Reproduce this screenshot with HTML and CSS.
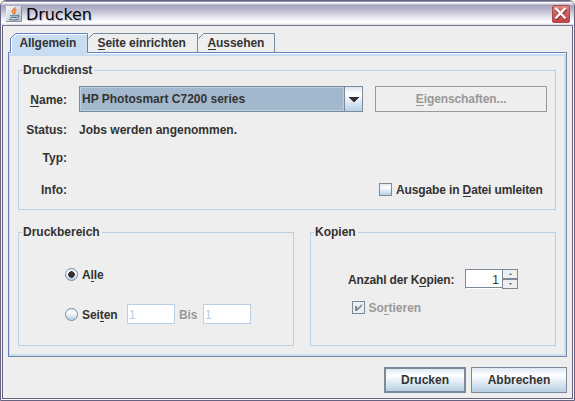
FILE: index.html
```html
<!DOCTYPE html>
<html lang="de">
<head>
<meta charset="utf-8">
<title>Drucken</title>
<link rel="stylesheet" href="styles.css">
</head>
<body>
<div class="window">
  <header class="titlebar">
    <svg class="java" width="16" height="16" viewBox="0 0 16 16">
      <defs><linearGradient id="tile" x2="1" y2="1"><stop stop-color="#f5f7f8"/><stop offset="1" stop-color="#aebdc8"/></linearGradient></defs>
      <rect width="16" height="16" fill="url(#tile)"/>
      <path d="M0 15.500h15.500V0" fill="none" stroke="#8192a2"/>
      <path d="M9.300 1.200C10 3 5.800 3.800 6.300 5.600C6.600 6.700 8 7.300 7.400 8.600M10.500 4C8.500 4.600 8.200 5.500 8.800 6.300C9.300 7.100 8.900 7.800 8.500 8.300" fill="none" stroke="#e9782a" stroke-width="1.400"/>
      <path d="M4 9.700h7M4.500 11.500h6M11 9.500c2.500-.5 2.500 1.300 0 2M3 13.300c2 .9 7 .9 9.500 0" fill="none" stroke="#57758f" stroke-width="1.100"/>
    </svg>
    <h1 class="title">Drucken</h1>
    <svg class="close" width="18" height="18" viewBox="0 0 18 18">
      <defs><linearGradient id="red" x2="0" y2="1"><stop stop-color="#dd9080"/><stop offset=".45" stop-color="#cc605c"/><stop offset="1" stop-color="#c8434c"/></linearGradient></defs>
      <rect x=".5" y=".5" width="17" height="17" rx="1.500" fill="url(#red)" stroke="#a9484d"/>
      <path d="M4 4l10 10.500M14 4L4 14.500" stroke="#803038" stroke-width="3"/>
      <path d="M3.500 3l10 10.500M13.500 3l-10 10.500" stroke="#fff" stroke-width="2.400"/>
    </svg>
  </header>
  <main class="content">
    <nav class="tabs">
      <div class="tab active"><svg width="78" height="23" viewBox="0 0 78 23"><path d="M.5 23V5.500l5-5h72V23z" fill="#c8ddf2"/><path d="M1.500 20V6l4.500-4.500H77" fill="none" stroke="#fff"/><path d="M.5 19.500v-14l5-5h72v19" fill="none" stroke="#6382bf"/></svg><span>Allgemein</span></div>
      <div class="tab second"><svg width="111" height="20" viewBox="0 0 111 20"><path d="M.5 5.500l5-5h104v19" fill="none" stroke="#7a8a99"/></svg><span><u>S</u>eite einrichten</span></div>
      <div class="tab third"><svg width="78" height="20" viewBox="0 0 78 20"><path d="M.5 5.500l5-5h71v19" fill="none" stroke="#7a8a99"/></svg><span><u>A</u>ussehen</span></div>
    </nav>
    <section class="panel">
      <fieldset class="service">
        <legend>Druckdienst</legend>
        <div class="row name">
          <label><u>N</u>ame:</label>
          <div class="combo"><div class="value">HP Photosmart C7200 series</div><div class="drop"><svg width="10" height="5" viewBox="0 0 10 5"><path d="M0 0h10v1H9v1H8v1H7v1H6v1H4V4H3V3H2V2H1V1H0z" fill="#333"/></svg></div></div>
          <button class="props" disabled><u>E</u>igenschaften...</button>
        </div>
        <div class="row status"><label>Status:</label><span>Jobs werden angenommen.</span></div>
        <div class="row type"><label>Typ:</label></div>
        <div class="row info"><label>Info:</label><i class="check"></i><span>Ausgabe in <u>D</u>atei umleiten</span></div>
      </fieldset>
      <div class="groups">
        <fieldset class="range">
          <legend>Druckbereich</legend>
          <div class="option first"><i class="radio on"></i><span>A<u>l</u>le</span></div>
          <div class="option pages"><i class="radio"></i><span class="word">Sei<u>t</u>en</span><div class="field">1</div><span class="to">Bis</span><div class="field">1</div></div>
        </fieldset>
        <fieldset class="copies">
          <legend>Kopien</legend>
          <div class="count">
            <span class="label">Anzahl der K<u>o</u>pien:</span>
            <div class="number">1</div>
            <div class="arrows"><div><svg width="3" height="2" viewBox="0 0 3 2"><path d="M1 0h1v1h1v1H0V1h1z" fill="#7a8a99"/></svg></div><div><svg width="3" height="2" viewBox="0 0 3 2"><path d="M0 0h3v1H2v1H1V1H0z" fill="#7a8a99"/></svg></div></div>
          </div>
          <div class="collate"><svg width="13" height="13" viewBox="0 0 13 13"><rect x=".5" y=".5" width="12" height="12" fill="none" stroke="#7a8a99"/><path d="M3 5h2v2.500L10 3v2L5 10H3z" fill="#7a8a99"/></svg><span>So<u>r</u>tieren</span></div>
        </fieldset>
      </div>
    </section>
    <footer class="actions">
      <button class="default">Drucken</button>
      <button>Abbrechen</button>
    </footer>
  </main>
</div>
</body>
</html>
```
FILE: styles.css
```css
* { box-sizing: border-box; }
body { margin: 0; background: #fcf9e8; overflow: hidden; }
.window {
  width: 575px; height: 401px; border: 1px solid #666380; border-radius: 6px 6px 0 0;
  background: #f5f5fb; overflow: hidden; color: #333;
  font: bold 12px/14px "Liberation Sans", sans-serif;
}
u { text-decoration: none; background: linear-gradient(currentColor, currentColor) 0 13px / 100% 1px no-repeat; }
span, label, legend { white-space: nowrap; }

.titlebar {
  height: 24px; display: flex; padding: 0 5px 0 4px;
  background: linear-gradient(#8c8aa8 0 1px, #fff 1px 2px, #dedee9 2px 3px, #a6a5bf 4px, #b3b2ca 8px, #d8d8e5 14px, #fafafd 20px, #fff 22px, #d5d5df 24px);
}
.java { margin: 5px 0 0 1px; }
.title { margin: 3px 0 0 4px; font: 16px/21px "DejaVu Sans", sans-serif; letter-spacing: -.1px; color: #000; text-shadow: 1px 1px 1px #b4b3c8; }
.close { margin: 4px -1px 0 auto; }

.content {
  margin: 0 1px; height: 374px; background: #eee; border: 1px solid #666380;
  border-top-color: #7a7a90; padding: 7px 5px 0;
}
.tabs { display: flex; height: 19px; padding-left: 2px; }
.tab { position: relative; height: 20px; flex: none; }
.tab > svg { position: absolute; left: 0; top: 0; }
.tab span { position: relative; display: block; padding: 3px 0 0 9.5px; letter-spacing: -.07px; }
.active { width: 78px; z-index: 2; }
.second { width: 110px; }
.third { width: 77px; }

.panel {
  width: 559px; height: 305px; border: 1px solid #7a8a99; border-top-color: #6382bf; border-left-color: #6382bf;
  box-shadow: inset 0 1px #fff, inset 0 3px #c8ddf2, inset 1px 0 #c8ddf2, inset -2px -2px #c8ddf2;
  padding: 11px 10px 0 9px;
}
fieldset { margin: 0; padding: 0; border: 1px solid #b8cfe5; min-width: 0; }
legend { margin-left: 3px; padding: 0 2px 0 1px; height: 13px; line-height: 13px; }
.service { height: 146px; }
.service, .range, .copies { padding-top: 1px; }
.row { display: flex; position: relative; }
.row label { width: 48px; margin-right: 1px; text-align: right; flex: none; }
.row > span { margin-left: 11px; }
.name { margin-top: 8px; height: 26px; }
.name label { padding-top: 7px; }
.combo { display: flex; width: 284px; margin-left: 11px; border: 1px solid #7a8a99; }
.value { width: 264px; border: 1px solid #b8cfe5; background: #a3b8cc; padding: 4px 0 0 1px; }
.drop { flex: 1; border-left: 1px solid #7a8a99; background: linear-gradient(#dde8f3, #fff 30%, #b8cfe5); padding: 10px 0 0 4px; }
.drop svg, .arrows svg { display: block; }
button {
  height: 26px; padding: 0; border: 1px solid #7a8a99; color: #333; font: bold 12px/14px "Liberation Sans", sans-serif;
  background: linear-gradient(#dde8f3, #fff 30%, #b8cfe5);
}
.props { width: 172px; margin-left: 12px; background: #eee; border-color: #999; color: #999; letter-spacing: -.1px; }
.status { margin-top: 11px; }
.type { margin-top: 14px; }
.info { margin-top: 18px; }
.check { width: 13px; height: 13px; margin-left: 311px; border: 1px solid #7a8a99; background: linear-gradient(#dde8f3, #fff 30%, #b8cfe5); }
.info .check + span { margin-left: 4px; letter-spacing: -.13px; }

.groups { display: flex; gap: 16px; margin-top: 16px; }
.range { width: 276px; height: 120px; }
.copies { width: 246px; height: 120px; }
.option { display: flex; margin-left: 46px; }
.option span { margin-left: 4px; letter-spacing: -.1px; }
.first { margin-top: 28px; height: 14px; }
.radio { width: 13px; height: 13px; border: 1px solid #7a8a99; border-radius: 50%; background: linear-gradient(#dde8f3, #fff 30%, #b8cfe5); }
.radio.on { background: radial-gradient(circle, #333 0 3px, transparent 3.600px), linear-gradient(#dde8f3, #fff 30%, #b8cfe5); }
.pages { margin-top: 22px; height: 20px; }
.pages .radio { margin-top: 4px; }
.pages span { padding-top: 4px; }
.word { width: 36px; }
.field { width: 48px; height: 20px; border: 1px solid #b8cfe5; background: #fff; color: #b8cfe5; font-weight: normal; padding: 3px 0 0 1px; }
.word + .field { margin-left: 9px; }
.pages .to { width: 24px; color: #999; }
.count { display: flex; margin: 29px 0 0 37px; height: 20px; }
.label { width: 117px; padding-top: 4px; letter-spacing: -.17px; }
.number { width: 37px; height: 20px; border: 1px solid #7a8a99; border-right: 0; border-bottom-color: #fff; box-shadow: inset 0 -1px #7a8a99; background: #fff; text-align: right; padding: 3px 3px 0 0; font-weight: normal; }
.arrows { width: 16px; }
.arrows div { height: 10px; border: 1px solid #7a8a99; padding: 3px 0 0 6px; }
.collate { display: flex; margin: 12px 0 0 41px; gap: 3.5px; color: #999; }
.actions { display: flex; justify-content: flex-end; gap: 5px; padding: 10px 0 0; width: 559px; }
.actions button { width: 96px; }
.actions .default { width: 82px; border-width: 2px; }
```
